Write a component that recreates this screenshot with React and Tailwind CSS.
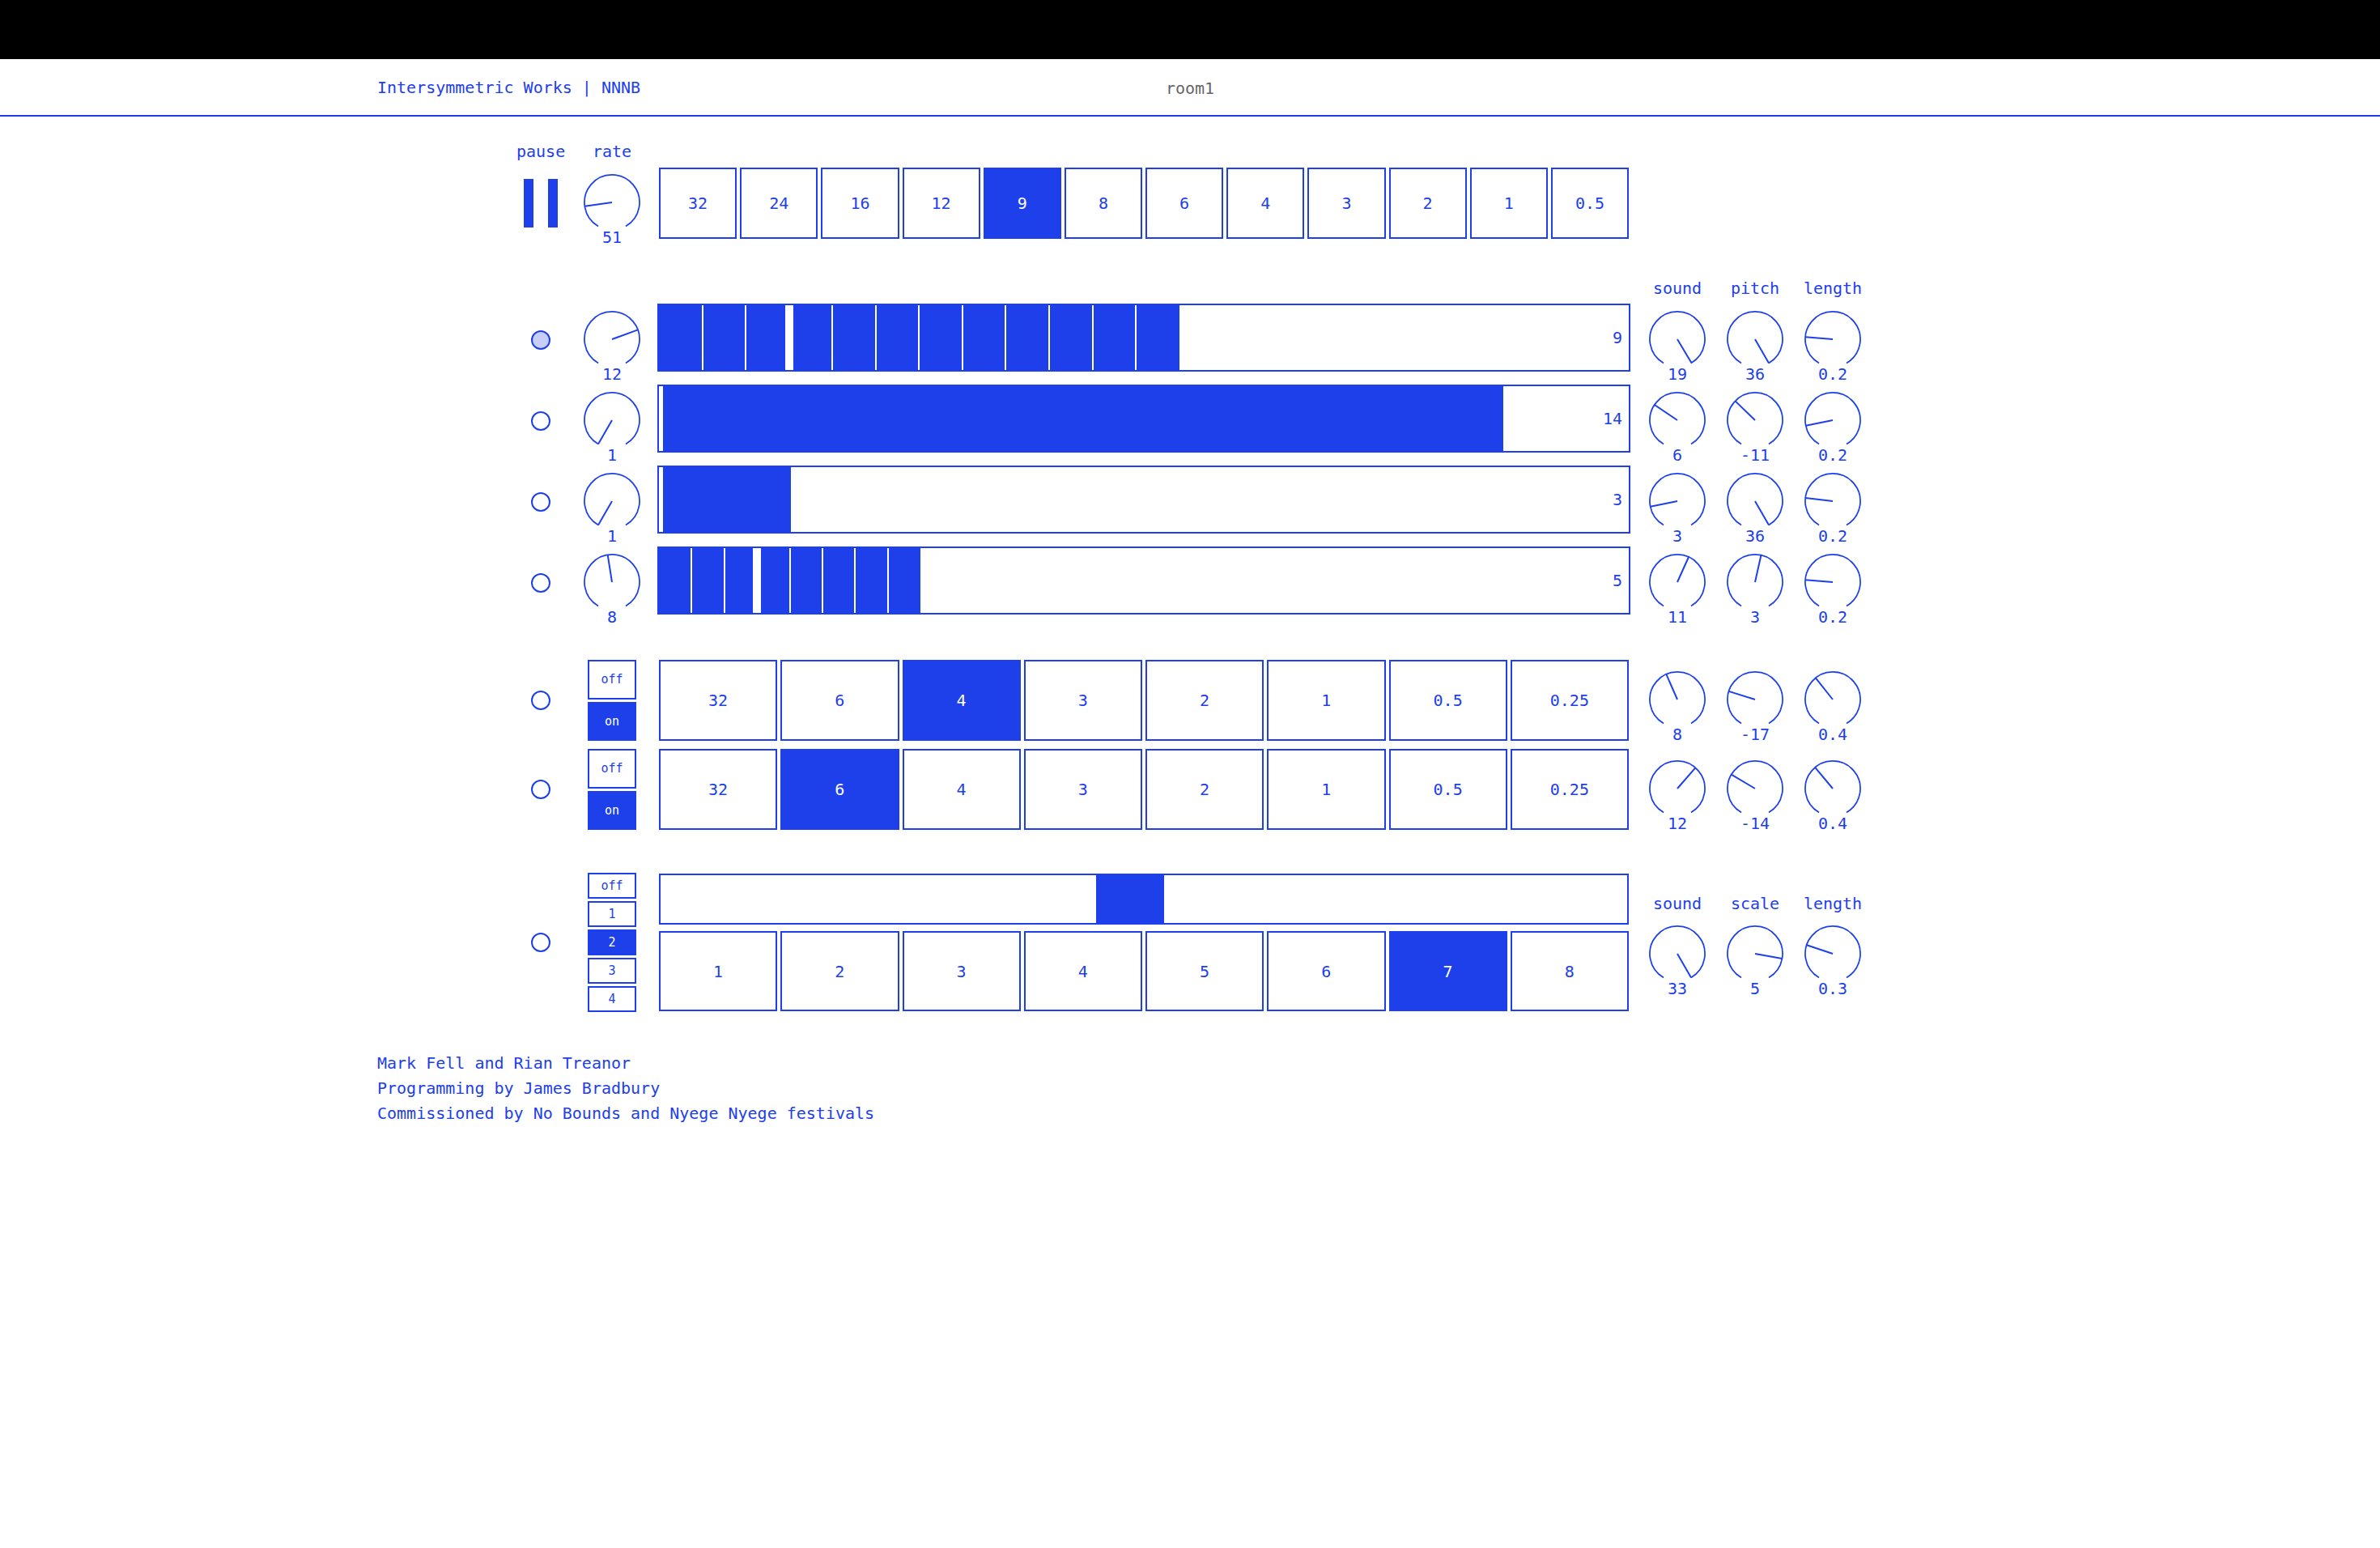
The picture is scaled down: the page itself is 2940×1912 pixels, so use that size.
const rates = ['32', '24', '16', '12', '9', '8', '6', '4', '3', '2', '1', '0.5'];
const divs = ['32', '6', '4', '3', '2', '1', '0.5', '0.25'];

const bars = [
  { on: true, knob: [70, '12'], n: 12, seg: 53.55, head: 3, label: '9', right: [[149, '19'], [150, '36'], [274.5, '0.2']] },
  { knob: [210, '1'], n: 1, seg: 1043, head: 0, label: '14', right: [[304, '6'], [314, '-11'], [258.6, '0.2']] },
  { knob: [210, '1'], n: 1, seg: 163, head: 0, label: '3', right: [[258.7, '3'], [150, '36'], [276.8, '0.2']] },
  { knob: [351, '8'], n: 8, seg: 40.4, head: 3, label: '5', right: [[24.3, '11'], [12.6, '3'], [274.5, '0.2']] },
];

const toggles = [
  { sel: 2, right: [[336.4, '8'], [287.4, '-17'], [321.6, '0.4']] },
  { sel: 1, right: [[40.9, '12'], [300.6, '-14'], [320, '0.4']] },
];

function Knob({ angle, value }) {
  const rad = (angle * Math.PI) / 180;
  const x = 36 + 34 * Math.sin(rad);
  const y = 36 - 34 * Math.cos(rad);
  return (
    <div className="flex flex-col items-center w-[72px]">
      <svg width="72" height="69" viewBox="0 0 72 69">
        <path d="M19 65.44 A34 34 0 1 1 53 65.44" fill="none" stroke="#1d40eb" strokeWidth="1.75" />
        <line x1="36" y1="36" x2={x} y2={y} stroke="#1d40eb" strokeWidth="2" />
      </svg>
      <span className="text-[20px] leading-[20px]">{value}</span>
    </div>
  );
}

function KnobGroup({ items }) {
  return (
    <div className="flex">
      {items.map(([a, v], i) => (
        <div key={i} className="w-[96px] flex justify-center">
          <Knob angle={a} value={v} />
        </div>
      ))}
    </div>
  );
}

function Radio({ on }) {
  return (
    <div className={`w-[24px] h-[24px] rounded-full border-2 border-[#1d40eb] ${on ? 'bg-[#c6cef9]' : 'bg-white'}`} />
  );
}

function Bar({ n, seg, head, label }) {
  return (
    <div className="relative h-[84px] border-2 border-[#1d40eb] overflow-hidden flex items-stretch">
      <div className="relative bg-[#1d40eb]" style={{ width: n * seg }}>
        {Array.from({ length: n - 1 }, (_, i) => (
          <div key={i} className="absolute top-0 bottom-0 w-[2px] bg-white" style={{ left: (i + 1) * seg - 1 }} />
        ))}
        <div className="absolute top-0 bottom-0 w-[10px] bg-white" style={{ left: head * seg - 5 }} />
      </div>
      <div className="flex-1" />
      <span className="self-center pr-[8px] text-[20px]">{label}</span>
    </div>
  );
}

function Cell({ active, children, className = '' }) {
  return (
    <div
      className={`flex-1 flex items-center justify-center border-2 border-[#1d40eb] ${
        active ? 'bg-[#1d40eb] text-white' : 'bg-white'
      } ${className}`}
    >
      {children}
    </div>
  );
}

export default function App() {
  return (
    <div className="min-h-screen bg-white text-[#1d40eb] font-['DejaVu_Sans_Mono',monospace] text-[20px]">
      <div className="h-[73px] bg-black" />
      <header className="h-[71px] border-b-2 border-[#1d40eb] grid grid-cols-[1fr_auto_1fr] items-center">
        <div className="pl-[466px]">Intersymmetric Works | NNNB</div>
        <div className="text-[#666] pt-[3px]">room1</div>
        <div />
      </header>

      <main className="ml-[638px]">
        {/* pause / rate */}
        <div className="mt-[31px] flex h-[24px] leading-[24px]">
          <div className="w-[60px] text-center">pause</div>
          <div className="ml-[22px] w-[72px] text-center">rate</div>
        </div>
        <div className="mt-[8px] flex h-[88px]">
          <div className="w-[60px] flex justify-center items-center gap-[18px]">
            <div className="w-[12px] h-[60px] bg-[#1d40eb]" />
            <div className="w-[12px] h-[60px] bg-[#1d40eb]" />
          </div>
          <div className="ml-[22px] w-[72px] pt-[7px]">
            <Knob angle={262} value="51" />
          </div>
          <div className="ml-[20px] w-[1202px] px-[2px] flex gap-[4px]">
            {rates.map((r) => (
              <Cell key={r} active={r === '9'}>{r}</Cell>
            ))}
          </div>
        </div>

        {/* sequencer bars */}
        <div className="mt-[49px] flex h-[24px] leading-[24px]">
          <div className="w-[1386px]" />
          <div className="w-[96px] text-center">sound</div>
          <div className="w-[96px] text-center">pitch</div>
          <div className="w-[96px] text-center">length</div>
        </div>
        <div className="mt-[7px] flex flex-col gap-[16px]">
          {bars.map((b, i) => (
            <div key={i} className="flex items-start h-[84px]">
              <div className="w-[60px] flex justify-center pt-[33px]">
                <Radio on={b.on} />
              </div>
              <div className="ml-[22px] w-[72px] pt-[8px]">
                <Knob angle={b.knob[0]} value={b.knob[1]} />
              </div>
              <div className="ml-[20px] w-[1202px]">
                <Bar n={b.n} seg={b.seg} head={b.head} label={b.label} />
              </div>
              <div className="ml-[10px] pt-[8px]">
                <KnobGroup items={b.right} />
              </div>
            </div>
          ))}
        </div>

        {/* on/off division rows */}
        <div className="mt-[56px] flex flex-col gap-[10px]">
          {toggles.map((t, i) => (
            <div key={i} className="flex h-[100px]">
              <div className="w-[60px] flex justify-center items-center">
                <Radio />
              </div>
              <div className="ml-[22px] w-[72px] flex justify-center">
                <div className="w-[60px] flex flex-col gap-[3px] text-[15px]">
                  <Cell>off</Cell>
                  <Cell active>on</Cell>
                </div>
              </div>
              <div className="ml-[20px] w-[1202px] px-[2px] flex gap-[4px]">
                {divs.map((d, j) => (
                  <Cell key={j} active={j === t.sel}>{d}</Cell>
                ))}
              </div>
              <div className="ml-[10px] pt-[13px]">
                <KnobGroup items={t.right} />
              </div>
            </div>
          ))}
        </div>

        {/* scale row */}
        <div className="mt-[53px] flex">
          <div className="w-[60px] flex justify-center items-center">
            <Radio />
          </div>
          <div className="ml-[22px] w-[72px] flex justify-center">
            <div className="w-[60px] flex flex-col gap-[3px] text-[15px]">
              {['off', '1', '2', '3', '4'].map((s) => (
                <div
                  key={s}
                  className={`h-[32px] flex items-center justify-center border-2 border-[#1d40eb] ${
                    s === '2' ? 'bg-[#1d40eb] text-white' : ''
                  }`}
                >
                  {s}
                </div>
              ))}
            </div>
          </div>
          <div className="ml-[20px] w-[1202px] px-[2px] pt-[1px] flex flex-col">
            <div className="h-[63px] border-2 border-[#1d40eb] flex">
              <div className="ml-[538px] w-[84px] bg-[#1d40eb]" />
            </div>
            <div className="mt-[8px] h-[99px] flex gap-[4px]">
              {['1', '2', '3', '4', '5', '6', '7', '8'].map((s) => (
                <Cell key={s} active={s === '7'}>{s}</Cell>
              ))}
            </div>
          </div>
          <div className="ml-[10px] pt-[26px]">
            <div className="flex h-[24px] leading-[24px]">
              <div className="w-[96px] text-center">sound</div>
              <div className="w-[96px] text-center">scale</div>
              <div className="w-[96px] text-center">length</div>
            </div>
            <div className="mt-[14px]">
              <KnobGroup items={[[150, '33'], [100, '5'], [288.4, '0.3']]} />
            </div>
          </div>
        </div>
      </main>

      <footer className="mt-[48px] ml-[466px] leading-[31px]">
        <div>Mark Fell and Rian Treanor</div>
        <div>Programming by James Bradbury</div>
        <div>Commissioned by No Bounds and Nyege Nyege festivals</div>
      </footer>
    </div>
  );
}
